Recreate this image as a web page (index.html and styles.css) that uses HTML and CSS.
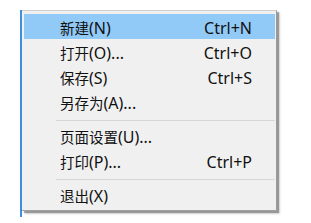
FILE: index.html
```html
<!DOCTYPE html>
<html lang="zh-CN">
<head>
<meta charset="utf-8">
<link rel="stylesheet" href="styles.css">
</head>
<body>
<div class="window">
  <div class="menu">
    <div class="item active"><span class="label"><span class="zh">新建</span>(N)</span><span class="key">Ctrl+N</span></div>
    <div class="item"><span class="label"><span class="zh">打开</span>(O)...</span><span class="key">Ctrl+O</span></div>
    <div class="item"><span class="label"><span class="zh">保存</span>(S)</span><span class="key">Ctrl+S</span></div>
    <div class="item"><span class="label"><span class="zh">另存为</span>(A)...</span></div>
    <div class="sep"></div>
    <div class="item"><span class="label"><span class="zh">页面设置</span>(U)...</span></div>
    <div class="item"><span class="label"><span class="zh">打印</span>(P)...</span><span class="key">Ctrl+P</span></div>
    <div class="sep"></div>
    <div class="item"><span class="label"><span class="zh">退出</span>(X)</span></div>
  </div>
</div>
</body>
</html>
```
FILE: styles.css
```css
html, body {
  margin: 0;
  padding: 0;
  background: #ffffff;
}
body {
  font-family: "Noto Sans", "Noto Sans CJK SC", sans-serif;
  font-size: 16px;
  color: #111;
}
.window {
  margin: 10px 0 0 20px;
  height: 207px;
  border-left: 2px solid #3d8fe0;
  width: 270px;
}
.menu {
  width: 255px;
  box-sizing: border-box;
  background: #f0f0f0;
  border: 1px solid #cfcfcf;
  border-left: none;
  border-right-color: #9a9a9a;
  border-bottom-color: #a0a0a0;
  padding: 3px 1px 3px 2px;
  box-shadow: 2px 2px 1px rgba(0,0,0,0.3), 3px 3px 2px rgba(0,0,0,0.15);
}
.item {
  height: 25px;
  display: flex;
  align-items: center;
  justify-content: space-between;
  padding: 2px 23px 0 36px;
  box-sizing: border-box;
  line-height: 1;
}
.label {
  display: flex;
  align-items: baseline;
}
.zh {
  font-family: "Noto Sans CJK SC", sans-serif;
  font-size: 14.5px;
}
.item.active {
  background: #91c9f7;
}
.sep {
  height: 9px;
  display: flex;
  align-items: flex-start;
  padding-top: 6px;
  box-sizing: border-box;
  margin-left: 32px;
}
.sep::before {
  content: "";
  flex: 1;
  height: 1px;
  background: #d7d7d7;
}
```
